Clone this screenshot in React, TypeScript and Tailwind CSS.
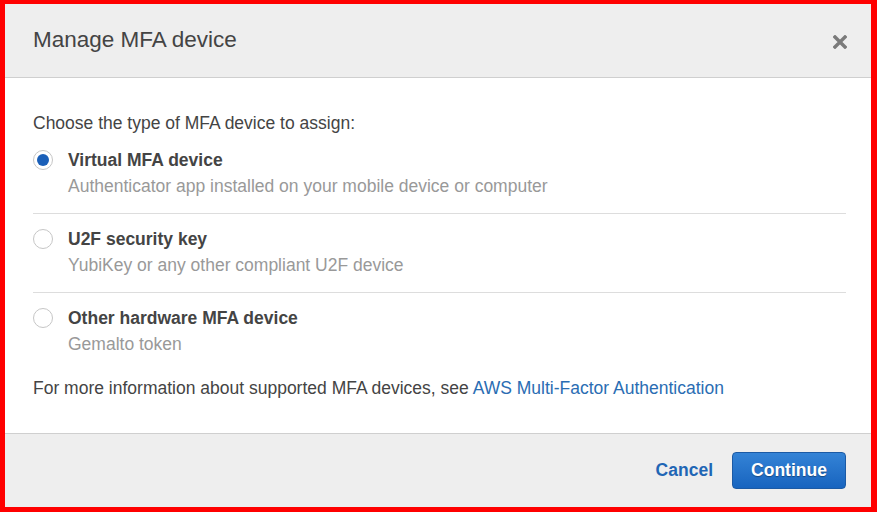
import React from 'react';

const options = [
  { id: 'virtual', title: 'Virtual MFA device', desc: 'Authenticator app installed on your mobile device or computer' },
  { id: 'u2f', title: 'U2F security key', desc: 'YubiKey or any other compliant U2F device' },
  { id: 'hardware', title: 'Other hardware MFA device', desc: 'Gemalto token' },
];

const Radio: React.FC<{ checked: boolean }> = ({ checked }) => (
  <span className="mt-[3px] flex h-[20px] w-[20px] shrink-0 items-center justify-center rounded-full border border-[#c6c6c6] bg-white">
    {checked && <span className="h-[12px] w-[12px] rounded-full bg-[#1a5fb8]" />}
  </span>
);

export default function App() {
  const selected = 'virtual';

  return (
    <div
      className="flex h-[512px] w-[877px] flex-col border-t-4 border-r-[6px] border-b-[5px] border-l-[5px] border-[#ff0000] bg-white text-[#333]"
      style={{ fontFamily: '"Liberation Sans", Arial, sans-serif' }}
    >
      {/* Header */}
      <div className="flex h-[74px] shrink-0 items-center justify-between border-b border-[#cfcfcf] bg-[#eeeeee] pr-[24px] pl-[28px]">
        <h1 className="text-[22.5px] leading-none text-[#444]">Manage MFA device</h1>
        <svg width="14" height="14" viewBox="0 0 14 14" className="mt-[3px]">
          <path d="M2 2 L12 12 M12 2 L2 12" stroke="#7a7a7a" strokeWidth="3.4" strokeLinecap="square" />
        </svg>
      </div>

      {/* Body */}
      <div className="flex-1 pt-[35px] pr-[25px] pl-[28px]">
        <p className="text-[17.5px] leading-[20px] text-[#444]">Choose the type of MFA device to assign:</p>
        <div className="mt-[2px]">
          {options.map((o, i) => (
            <div
              key={o.id}
              className={
                i < options.length - 1
                  ? 'flex gap-[15px] border-b border-[#dddddd] pt-[12px] pb-[14px]'
                  : 'flex gap-[15px] pt-[12px]'
              }
            >
              <Radio checked={o.id === selected} />
              <div className="flex flex-col">
                <span className="text-[17.5px] leading-[27px] font-bold text-[#444]">{o.title}</span>
                <span className="text-[17.5px] leading-[25px] text-[#999]">{o.desc}</span>
              </div>
            </div>
          ))}
        </div>
        <p className="mt-[21px] text-[17.5px] leading-[20px] text-[#444]">
          For more information about supported MFA devices, see{' '}
          <a className="text-[#2a6db3]">AWS Multi-Factor Authentication</a>
        </p>
      </div>

      {/* Footer */}
      <div className="flex h-[74px] shrink-0 items-center justify-end gap-[19px] border-t border-[#cfcfcf] bg-[#eeeeee] pr-[25px]">
        <button className="text-[17.5px] font-bold text-[#1f66b5]">Cancel</button>
        <button
          className="h-[37px] w-[114px] rounded-[4px] border border-[#1b5aa5] bg-gradient-to-b from-[#3483d6] to-[#1764bf] text-[17.5px] font-bold text-white"
          style={{ textShadow: '0 1px 1px rgba(0,0,0,0.35)' }}
        >
          Continue
        </button>
      </div>
    </div>
  );
}
